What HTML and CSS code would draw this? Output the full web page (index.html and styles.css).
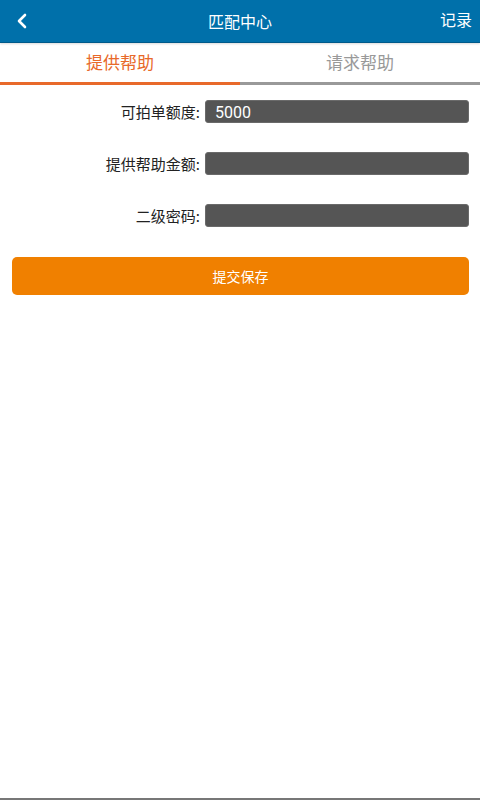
FILE: index.html
```html
<!DOCTYPE html>
<html lang="zh-CN">
<head>
<meta charset="utf-8">
<title>匹配中心</title>
<link rel="stylesheet" href="styles.css">
</head>
<body>
<div class="app">
  <header class="topbar">
    <span class="back"><svg width="12" height="16" viewBox="0 0 12 16"><path d="M9 2 L3 8 L9 14" fill="none" stroke="#fff" stroke-width="2.6" stroke-linecap="round" stroke-linejoin="round"/></svg></span>
    <h1 class="title">匹配中心</h1>
    <span class="record">记录</span>
  </header>
  <nav class="tabs">
    <div class="tab active">提供帮助</div>
    <div class="tab">请求帮助</div>
  </nav>
  <form class="form">
    <div class="row">
      <label class="label">可拍单额度:</label>
      <div class="input">5000</div>
    </div>
    <div class="row">
      <label class="label">提供帮助金额:</label>
      <div class="input"></div>
    </div>
    <div class="row">
      <label class="label">二级密码:</label>
      <div class="input"></div>
    </div>
    <div class="btnwrap">
      <button type="button" class="submit">提交保存</button>
    </div>
  </form>
  <div class="spacer"></div>
  <div class="bottomline"></div>
</div>
</body>
</html>
```
FILE: styles.css
```css
html, body {
  margin: 0;
  padding: 0;
  background: #fff;
}
body {
  font-family: "Noto Sans CJK SC", "Noto Sans", sans-serif;
}
.app {
  width: 480px;
  height: 800px;
  display: flex;
  flex-direction: column;
}
.topbar {
  height: 42px;
  background: #0070aa;
  border-bottom: 1px solid #005a8a;
  box-shadow: 0 1px 2px rgba(0,0,0,0.15);
  display: grid;
  grid-template-columns: 1fr auto 1fr;
  align-items: center;
  flex: none;
}
.back {
  width: 12px;
  height: 16px;
  margin-left: 16px;
  display: flex;
  justify-self: start;
}
.title {
  margin: 0;
  text-align: center;
  color: #fff;
  font-size: 16px;
  font-weight: normal;
  line-height: 42px;
}
.record {
  justify-self: end;
  color: #fff;
  font-size: 16px;
  margin-right: 8px;
  line-height: 42px;
  margin-top: -4px;
}
.tabs {
  display: flex;
  height: 42px;
  flex: none;
}
.tab {
  flex: 1;
  text-align: center;
  font-size: 17px;
  line-height: 38px;
  color: #999;
  border-bottom: 3px solid #999;
}
.tab.active {
  color: #e8692a;
  border-bottom-color: #e8692a;
}
.form {
  padding: 15px 11px 0 12px;
  display: flex;
  flex-direction: column;
  gap: 29px;
}
.row {
  display: flex;
  align-items: center;
  height: 23px;
}
.label {
  width: 188px;
  text-align: right;
  font-size: 15px;
  color: #222;
  padding-right: 5px;
}
.input {
  flex: 1;
  height: 23px;
  box-sizing: border-box;
  background: #555;
  border: 1px solid #6a6a6a;
  border-radius: 3px;
  color: #fff;
  font-family: "Roboto", "Noto Sans", sans-serif;
  font-size: 16px;
  line-height: 23px;
  padding-left: 9px;
}
.btnwrap {
  display: flex;
  margin-top: 1px;
}
.submit {
  flex: 1;
  height: 38px;
  background: #f08000;
  border: none;
  border-radius: 5px;
  color: #fff;
  font-family: "Noto Sans CJK SC", sans-serif;
  font-size: 14px;
  padding: 0;
}
.spacer {
  flex: 1;
}
.bottomline {
  height: 2px;
  background: #777;
  flex: none;
}
```
